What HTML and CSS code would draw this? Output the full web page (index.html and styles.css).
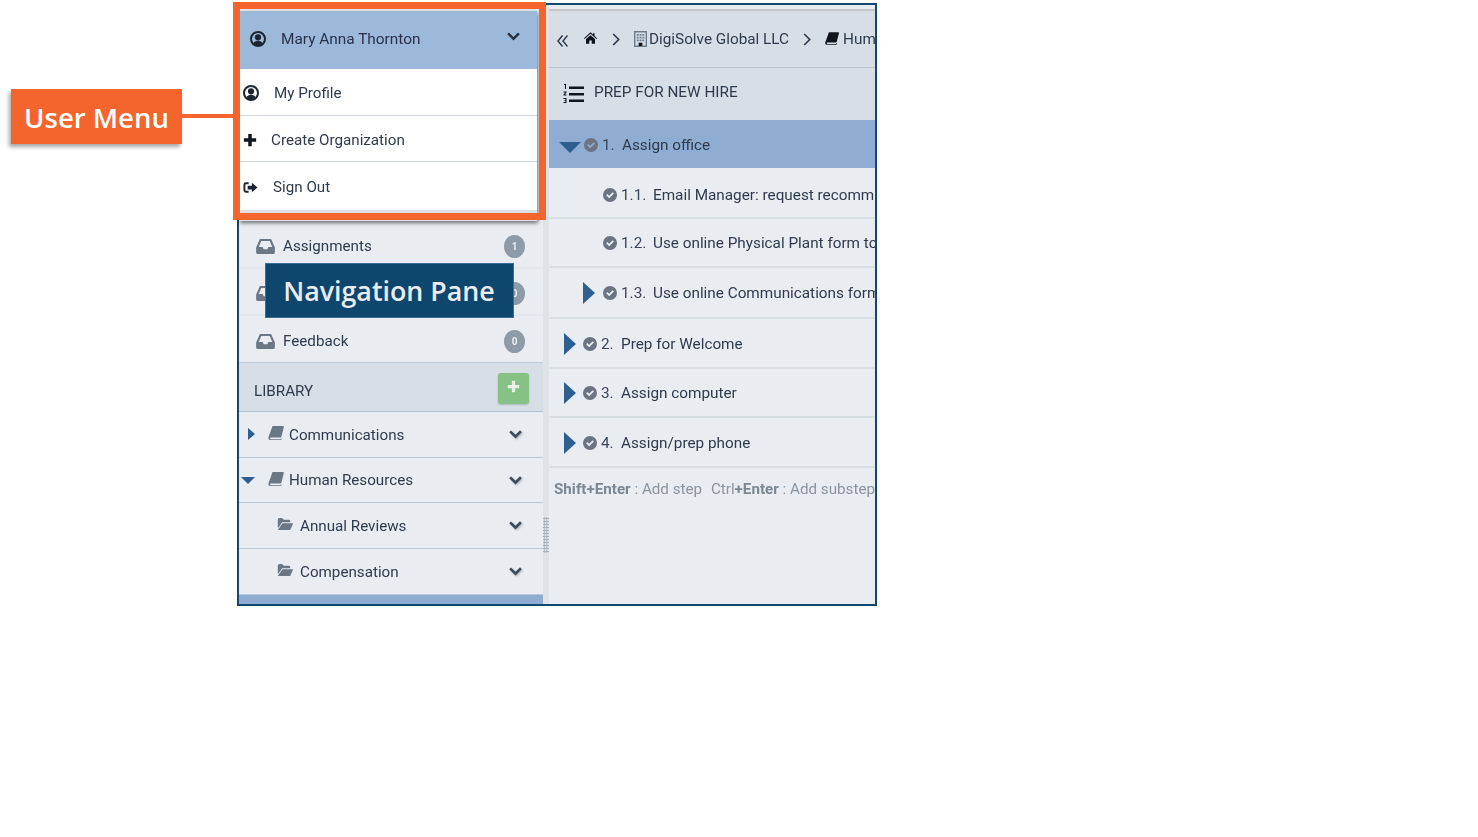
FILE: index.html
```html
<!DOCTYPE html>
<html lang="en">
<head>
    <meta charset="UTF-8">
    <meta name="viewport" content="width=device-width, initial-scale=1.0">
    <title>User Menu</title>
    <link rel="stylesheet" href="styles.css">
</head>
<body>

    <svg class="defs" width="0" height="0">
        <symbol id="i-user" viewBox="0 0 16 16"><path fill-rule="evenodd" d="M8 0a8 8 0 1 1 0 16A8 8 0 0 1 8 0zm0 2a6 6 0 1 0 0 12A6 6 0 0 0 8 2z"/><circle cx="8" cy="6.300" r="3.100"/><path d="M3.500 12.400c.7-1.700 2.300-2.600 4.500-2.600s3.800 .9 4.500 2.600A6.400 6.400 0 0 1 8 14.400a6.400 6.400 0 0 1-4.500-2z"/></symbol>
        <symbol id="i-down" viewBox="0 0 16 16"><path d="M8 12.200 1.300 5.500 3.200 3.600 8 8.400l4.800-4.800 1.900 1.900z"/></symbol>
        <symbol id="i-right" viewBox="0 0 8 13"><path fill="none" stroke="currentColor" stroke-width="1.700" d="M1.200 1 6.700 6.500 1.200 12"/></symbol>
        <symbol id="i-back" viewBox="0 0 11 13"><path fill="none" stroke="currentColor" stroke-width="1.500" d="M5.500 1.500 1 7l4.500 5.500M10.500 1.500 6 7l4.500 5.500"/></symbol>
        <symbol id="i-plus" viewBox="0 0 16 16"><path d="M6 1h4v5h5v4h-5v5H6v-5H1V6h5z"/></symbol>
        <symbol id="i-out" viewBox="0 0 16 16"><path d="M6 2.500H3A2.500 2.500 0 0 0 .5 5v6A2.500 2.500 0 0 0 3 13.500h3v-2H3a.5.5 0 0 1-.5-.5V5a.5.5 0 0 1 .5-.5h3z"/><path d="M9.500 3 15.500 8l-6 5v-3H5V6h4.500z"/></symbol>
        <symbol id="i-inbox" viewBox="0 0 20 16"><path fill-rule="evenodd" d="M4 0h12l4 9v5a2 2 0 0 1-2 2H2a2 2 0 0 1-2-2V9zm1.500 2L2.800 8.500H7L8 11h4l1-2.500h4.200L14.500 2z"/></symbol>
        <symbol id="i-book" viewBox="0 0 18 16"><path d="M5 0h12.500l.5 1-3 11.500-.8.700H3.500c-1 0-1.300.6-1.300 1s.4 .8 1.300 .8H14l.6-.8.900.2-.5 1.200-.9.400H3C1 16 0 14.800 .3 13z"/></symbol>
        <symbol id="i-folder" viewBox="0 0 18 14"><path d="M0 2a2 2 0 0 1 2-2h3l2 2h6a1.500 1.500 0 0 1 1.500 1.500V5H5L1 11H0z"/><path d="M5.500 6H18l-3.500 8H0z"/></symbol>
        <symbol id="i-check" viewBox="0 0 16 16"><path fill-rule="evenodd" d="M8 0a8 8 0 1 1 0 16A8 8 0 0 1 8 0zm4.500 6.200-1.400-1.400L7 8.900 4.900 6.800 3.500 8.200 7 11.700z"/></symbol>
        <symbol id="i-home" viewBox="0 0 16 14"><path d="M8 0 11 2.700V1h2v3.500L16 7.200l-.8 .9L8 1.800 .8 8.100 0 7.200z"/><path d="M8 3.500 13.500 8.200V14H9.500v-4h-3v4h-4V8.200z"/></symbol>
        <symbol id="i-build" viewBox="0 0 14 17"><path fill="#6d7a88" fill-rule="evenodd" d="M0 0h14v17H0zm1.500 1.500v14h11v-14z"/><path fill="#6d7a88" d="M3 3h2v2H3zM6 3h2v2H6zM9 3h2v2H9zM3 6h2v2H3zM6 6h2v2H6zM9 6h2v2H9zM3 9h2v2H3zM6 9h2v2H6zM9 9h2v2H9z"/><path fill="#111" d="M5 12.500h4V16H5z"/></symbol>
        <symbol id="i-list" viewBox="0 0 21 20"><path d="M6 2.500h15v2.500H6zM6 9h15v2.500H6zM6 15.500h15V18H6z"/><path d="M1 0h2v5H2V1H1zM.5 7.500h3v1l-1.800 2h1.800v1h-3v-1l1.800-2H.5zM.5 14h3v5h-3v-1h2v-1h-1v-1h1v-1h-2z"/></symbol>
    </svg>

    <div class="app">
        <div class="sidebar">
            <div class="user-drop">
                <div class="user-head">
                    <svg class="ic ic-user"><use href="#i-user"/></svg>
                    <span class="user-name">Mary Anna Thornton</span>
                    <svg class="ic ic-head-chev"><use href="#i-down"/></svg>
                </div>
                <div class="user-menu">
                    <div class="menu-row"><svg class="ic ic-user ic-menu"><use href="#i-user"/></svg><span class="menu-a">My Profile</span></div>
                    <div class="menu-row row-46"><svg class="ic ic-plus"><use href="#i-plus"/></svg><span class="menu-b">Create Organization</span></div>
                    <div class="menu-row row-48"><svg class="ic ic-out"><use href="#i-out"/></svg><span class="menu-c">Sign Out</span></div>
                </div>
            </div>

            <div class="nav-row"><svg class="ic ic-inbox"><use href="#i-inbox"/></svg><span>Assignments</span><b class="badge">1</b></div>
            <div class="nav-row nav-47"><svg class="ic ic-inbox"><use href="#i-inbox"/></svg><span></span><b class="badge">0</b></div>
            <div class="nav-row nav-47 nav-last"><svg class="ic ic-inbox"><use href="#i-inbox"/></svg><span>Feedback</span><b class="badge">0</b></div>

            <div class="lib-head">
                <span>LIBRARY</span>
                <div class="add-btn"><svg class="ic ic-add"><use href="#i-plus"/></svg></div>
            </div>

            <div class="lib-row">
                <i class="tri tri-right tri-small"></i>
                <svg class="ic ic-book"><use href="#i-book"/></svg>
                <span>Communications</span>
                <svg class="ic ic-chev"><use href="#i-down"/></svg>
            </div>
            <div class="lib-row lib-45">
                <i class="tri tri-down tri-small-d"></i>
                <svg class="ic ic-book"><use href="#i-book"/></svg>
                <span>Human Resources</span>
                <svg class="ic ic-chev"><use href="#i-down"/></svg>
            </div>
            <div class="lib-row lib-sub">
                <svg class="ic ic-folder"><use href="#i-folder"/></svg>
                <span>Annual Reviews</span>
                <svg class="ic ic-chev"><use href="#i-down"/></svg>
            </div>
            <div class="lib-row lib-sub">
                <svg class="ic ic-folder"><use href="#i-folder"/></svg>
                <span>Compensation</span>
                <svg class="ic ic-chev"><use href="#i-down"/></svg>
            </div>
            <div class="side-bar-end"></div>
        </div>

        <div class="splitter"><div class="grip"></div></div>

        <div class="main">
            <div class="crumbs">
                <svg class="ic ic-back"><use href="#i-back"/></svg>
                <svg class="ic ic-home"><use href="#i-home"/></svg>
                <svg class="ic ic-sep"><use href="#i-right"/></svg>
                <svg class="ic ic-build"><use href="#i-build"/></svg>
                <span>DigiSolve Global LLC</span>
                <svg class="ic ic-sep"><use href="#i-right"/></svg>
                <svg class="ic ic-crumb-book"><use href="#i-book"/></svg>
                <span>Hum</span>
            </div>
            <div class="title-row">
                <svg class="ic ic-list"><use href="#i-list"/></svg>
                <span>PREP FOR NEW HIRE</span>
            </div>

            <div class="step step-active">
                <i class="tri tri-down tri-big-d"></i>
                <svg class="ic ic-check"><use href="#i-check"/></svg>
                <span class="num">1.</span><span>Assign office</span>
            </div>
            <div class="step step-sub h51 step-first">
                <svg class="ic ic-check"><use href="#i-check"/></svg>
                <span class="num">1.1.</span><span>Email Manager: request recomm</span>
            </div>
            <div class="step step-sub h49">
                <svg class="ic ic-check"><use href="#i-check"/></svg>
                <span class="num">1.2.</span><span>Use online Physical Plant form to</span>
            </div>
            <div class="step step-sub step-sub-tri h51">
                <i class="tri tri-right tri-big"></i>
                <svg class="ic ic-check"><use href="#i-check"/></svg>
                <span class="num">1.3.</span><span>Use online Communications form</span>
            </div>
            <div class="step h50">
                <i class="tri tri-right tri-big"></i>
                <svg class="ic ic-check"><use href="#i-check"/></svg>
                <span class="num">2.</span><span>Prep for Welcome</span>
            </div>
            <div class="step h49">
                <i class="tri tri-right tri-big"></i>
                <svg class="ic ic-check"><use href="#i-check"/></svg>
                <span class="num">3.</span><span>Assign computer</span>
            </div>
            <div class="step h50">
                <i class="tri tri-right tri-big"></i>
                <svg class="ic ic-check"><use href="#i-check"/></svg>
                <span class="num">4.</span><span>Assign/prep phone</span>
            </div>
            <div class="hint"><b>Shift+Enter</b> : Add step <span class="hint-next">Ctrl<b>+Enter</b> : Add substep</span></div>
        </div>
    </div>

    <div class="menu-frame"></div>
    <div class="callout callout-user">User Menu</div>
    <div class="callout-line"></div>
    <div class="callout callout-nav">Navigation Pane</div>

</body>
</html>
```

FILE: styles.css
```css
body {
    margin: 0;
    background: white;
    font-family: Roboto, "Liberation Sans", sans-serif;
    font-size: 15.2px;
    color: #2f3b4c;
}
.defs {
    position: absolute;
}
.ic {
    display: block;
    flex: none;
}

.app {
    display: flex;
    box-sizing: border-box;
    width: 640px;
    height: 603px;
    margin: 3px 0 0 237px;
    border: 2px solid #12486f;
    background: #e9edf2;
    filter: blur(0.3px);
}

/* left column */
.sidebar {
    width: 304px;
    flex: none;
    padding-top: 6px;
    box-sizing: border-box;
}
.user-drop {
    width: 298px;
    box-shadow: 1px 2px 4px rgba(0, 0, 0, 0.55);
}
.user-head {
    display: flex;
    align-items: center;
    height: 58px;
    padding-bottom: 2px;
    box-sizing: border-box;
    background: #9db9da;
}
.ic-user {
    width: 16px;
    height: 16px;
    margin-left: 11px;
    fill: #1c2430;
}
.user-name {
    margin-left: 15px;
    font-size: 15.4px;
    color: #2b2f4a;
}
.ic-head-chev {
    width: 15px;
    height: 15px;
    margin-left: auto;
    margin-right: 16px;
    margin-top: -6px;
    fill: #28323f;
}
.user-menu {
    height: 152px;
    background: #dde1e6;
}
.menu-row {
    display: flex;
    align-items: center;
    height: 47px;
    padding-top: 1px;
    background: white;
    border-bottom: 1px solid #cdd5de;
    box-sizing: border-box;
}
.row-46 {
    height: 46px;
    padding-top: 3px;
}
.row-48 {
    height: 48px;
    padding-top: 2px;
    border-bottom: none;
}
.ic-menu {
    margin-left: 4px;
}
.menu-a {
    margin-left: 15px;
}
.ic-plus {
    width: 14px;
    height: 14px;
    margin-left: 4px;
    fill: #10151c;
}
.menu-b {
    margin-left: 14px;
}
.ic-out {
    width: 15px;
    height: 15px;
    margin-left: 4px;
    fill: #1c2430;
}
.menu-c {
    margin-left: 15px;
}
.nav-row {
    display: flex;
    align-items: center;
    height: 48px;
    padding: 4px 18px 0 17px;
    border-bottom: 2px solid #e2e7ed;
    box-sizing: border-box;
}
.nav-47 {
    height: 47px;
}
.nav-last {
    border-bottom: 1px solid #bcc8d4;
}
.nav-row span {
    margin-left: 8px;
}
.ic-inbox {
    width: 19px;
    height: 15px;
    fill: #6c7785;
}
.badge {
    margin-left: auto;
    width: 21px;
    height: 23px;
    line-height: 23px;
    border-radius: 50%;
    background: #8e9aa6;
    color: #e9edf2;
    font-size: 10px;
    text-align: center;
}
.lib-head {
    display: flex;
    align-items: center;
    justify-content: space-between;
    height: 49px;
    padding: 7px 14px 0 15px;
    background: #d7dee6;
    border-bottom: 1px solid #b3c3d2;
    box-sizing: border-box;
}
.add-btn {
    display: flex;
    align-items: center;
    justify-content: center;
    width: 31px;
    height: 31px;
    margin-top: -4px;
    border-radius: 3px;
    background: #86c285;
    box-shadow: 0 1px 2px rgba(0, 0, 0, 0.2);
}
.ic-add {
    width: 13px;
    height: 13px;
    margin-top: -4px;
    fill: #e8f4e6;
}
.lib-row {
    display: flex;
    align-items: center;
    height: 46px;
    padding: 0 20px 0 0;
    border-bottom: 1px solid #bcc8d4;
    box-sizing: border-box;
}
.lib-45 {
    height: 45px;
}
.lib-row span {
    margin-left: 5px;
}
.lib-sub {
    padding-left: 38px;
}
.lib-sub span {
    margin-left: 6px;
}
.ic-book {
    width: 16px;
    height: 14px;
    margin: -3px 0 0 13px;
    fill: #6c7785;
}
.ic-folder {
    width: 17px;
    height: 12px;
    margin-top: -3px;
    fill: #6c7785;
}
.ic-chev {
    width: 15px;
    height: 15px;
    margin-left: auto;
    fill: #3c4a5a;
    filter: drop-shadow(1px 1px 1px rgba(0, 0, 0, 0.25));
}
.side-bar-end {
    height: 9px;
    background: #8fadd2;
}

/* triangles */
.tri {
    display: block;
    width: 0;
    height: 0;
    flex: none;
    border-style: solid;
    border-color: transparent;
}
.tri-right {
    border-left-color: #2e5f90;
}
.tri-down {
    border-top-color: #2e5f90;
}
.tri-small {
    margin: -1px 0 0 9px;
    border-width: 6px 0 6px 7px;
}
.tri-small-d {
    margin: 1px 0 0 2px;
    border-width: 7px 7px 0 7px;
}
.tri-big {
    border-width: 11px 0 11px 12px;
}
.tri-big-d {
    border-width: 11px 11px 0 11px;
    margin-top: 5px;
}

/* grip between the columns */
.splitter {
    width: 6px;
    flex: none;
    background: #dfe3e8;
}
.grip {
    margin-top: 512px;
    height: 36px;
    background: radial-gradient(circle, #a8b0b9 1px, transparent 1.2px) 0 0 / 2.5px 3px;
}

/* right column */
.main {
    flex: 1;
    min-width: 0;
    overflow: hidden;
    padding-top: 4px;
    font-size: 15.3px;
    background: #e9edf2;
}
.crumbs {
    display: flex;
    align-items: center;
    height: 59px;
    padding-left: 8px;
    background: #d7dee6;
    border-top: 2px solid #c4c7ca;
    border-bottom: 1px solid #b8c4d0;
    box-sizing: border-box;
    white-space: nowrap;
}
.ic-back {
    width: 11px;
    height: 13px;
    margin-top: 3px;
    color: #2f3b4c;
}
.ic-home {
    width: 13px;
    height: 12px;
    margin: -3px 0 0 16px;
    fill: #0e1218;
}
.ic-sep {
    width: 8px;
    height: 13px;
    margin: 0 14px;
    color: #2f3b4c;
}
.ic-home + .ic-sep {
    margin-left: 15px;
}
.ic-build {
    width: 13px;
    height: 16px;
    margin-right: 2px;
}
.ic-crumb-book {
    width: 14px;
    height: 13px;
    margin-right: 4px;
    margin-top: -2px;
    fill: #12161c;
}
.title-row {
    display: flex;
    align-items: center;
    height: 52px;
    padding-left: 14px;
    background: #d7dee6;
    box-sizing: border-box;
    white-space: nowrap;
}
.ic-list {
    width: 21px;
    height: 20px;
    fill: #10151c;
}
.title-row span {
    margin: -4px 0 0 10px;
}
.step {
    display: flex;
    align-items: center;
    padding: 1px 0 0 15px;
    border-bottom: 2px solid #d7dfe5;
    box-sizing: border-box;
    white-space: nowrap;
}
.step span {
    flex: none;
}
.h49 {
    height: 49px;
}
.h50 {
    height: 50px;
}
.h51 {
    height: 51px;
}
.step-active {
    height: 48px;
    padding: 2px 0 0 10px;
    background: #8fadd2;
    border-bottom: none;
}
.step-first {
    padding-top: 4px;
}
.step-sub {
    padding-left: 54px;
}
.step-sub-tri {
    padding-left: 34px;
}
.ic-check {
    width: 14px;
    height: 14px;
    margin: 0 4px 0 7px;
    fill: #6b7480;
}
.step-active .ic-check {
    margin-left: 3px;
}
.step-sub .ic-check {
    margin-left: 0;
    margin-right: 4px;
}
.step-sub-tri .ic-check {
    margin-left: 8px;
}
.num {
    display: inline-block;
    width: 20px;
    color: #3b4656;
}
.step-sub .num {
    width: 32px;
}
.hint {
    padding: 12px 0 0 5px;
    font-size: 15.2px;
    color: #8a949f;
    white-space: nowrap;
}
.hint b {
    color: #7c8792;
    font-weight: 700;
}
.hint-next {
    margin-left: 5px;
}

/* annotations over the screenshot */
.menu-frame {
    position: absolute;
    left: 233px;
    top: 2px;
    width: 313px;
    height: 218px;
    box-sizing: border-box;
    border: 7px solid #f4652d;
}
.callout {
    position: absolute;
    display: flex;
    align-items: center;
    justify-content: center;
    box-sizing: border-box;
    font-family: "Open Sans", sans-serif;
    font-weight: 600;
}
.callout-user {
    left: 11px;
    top: 89px;
    width: 171px;
    height: 55px;
    padding-top: 2px;
    font-size: 27.5px;
    background: #f4652d;
    color: white;
    box-shadow: -2px 3px 4px rgba(0, 0, 0, 0.35);
}
.callout-line {
    position: absolute;
    left: 182px;
    top: 114px;
    width: 51px;
    height: 4px;
    background: #f4652d;
}
.callout-nav {
    left: 265px;
    top: 263px;
    width: 249px;
    height: 55px;
    padding-right: 1px;
    font-size: 26.8px;
    background: #0f466d;
    border: 1px solid #3b6d92;
    color: #e9edf2;
}
```
